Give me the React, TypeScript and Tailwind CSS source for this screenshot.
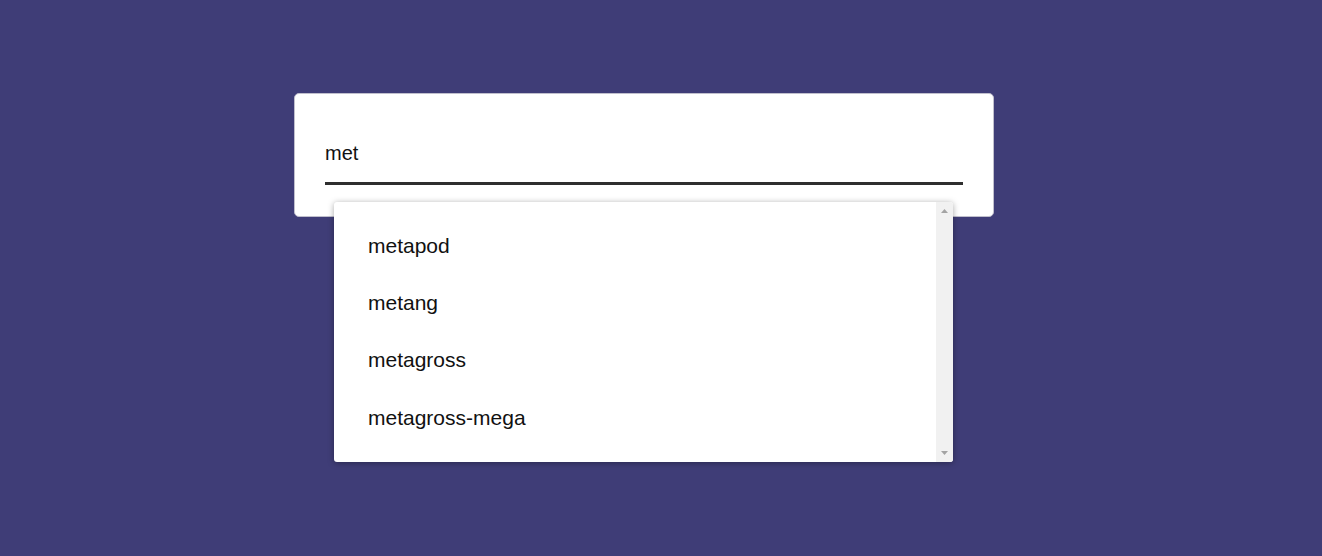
import React from "react";

const items = ["metapod", "metang", "metagross", "metagross-mega"];

export default function App() {
  return (
    <div
      className="w-full h-[556px] bg-[#3f3d77] pt-[93px] pl-[294px]"
      style={{ fontFamily: '"Liberation Sans", Arial, sans-serif' }}
    >
      <div className="relative w-[700px] h-[124px] bg-white border border-[#c0bfcd] rounded-[5px] p-[30px]">
        <div className="h-[61px] border-b-[3px] border-[#2f2f2f] flex items-center text-[20px] text-[#111]">
          met
        </div>
        <div className="absolute left-[39px] top-[108px] w-[619px] h-[260px] bg-white rounded-[3px] shadow-[0_1px_6px_rgba(0,0,0,0.35)] overflow-hidden flex">
          <ul className="flex-1 pt-[15px]">
            {items.map((it) => (
              <li
                key={it}
                className="h-[57.3px] flex items-center pl-[34px] text-[21px] text-[#111]"
              >
                {it}
              </li>
            ))}
          </ul>
          <div className="w-[17px] h-full bg-[#f1f1f1] flex flex-col items-center justify-between py-[7px]">
            <svg width="7" height="4" viewBox="0 0 7 4">
              <polygon points="3.5,0 7,4 0,4" fill="#a3a3a3" />
            </svg>
            <svg width="7" height="4" viewBox="0 0 7 4">
              <polygon points="0,0 7,0 3.5,4" fill="#a3a3a3" />
            </svg>
          </div>
        </div>
      </div>
    </div>
  );
}
